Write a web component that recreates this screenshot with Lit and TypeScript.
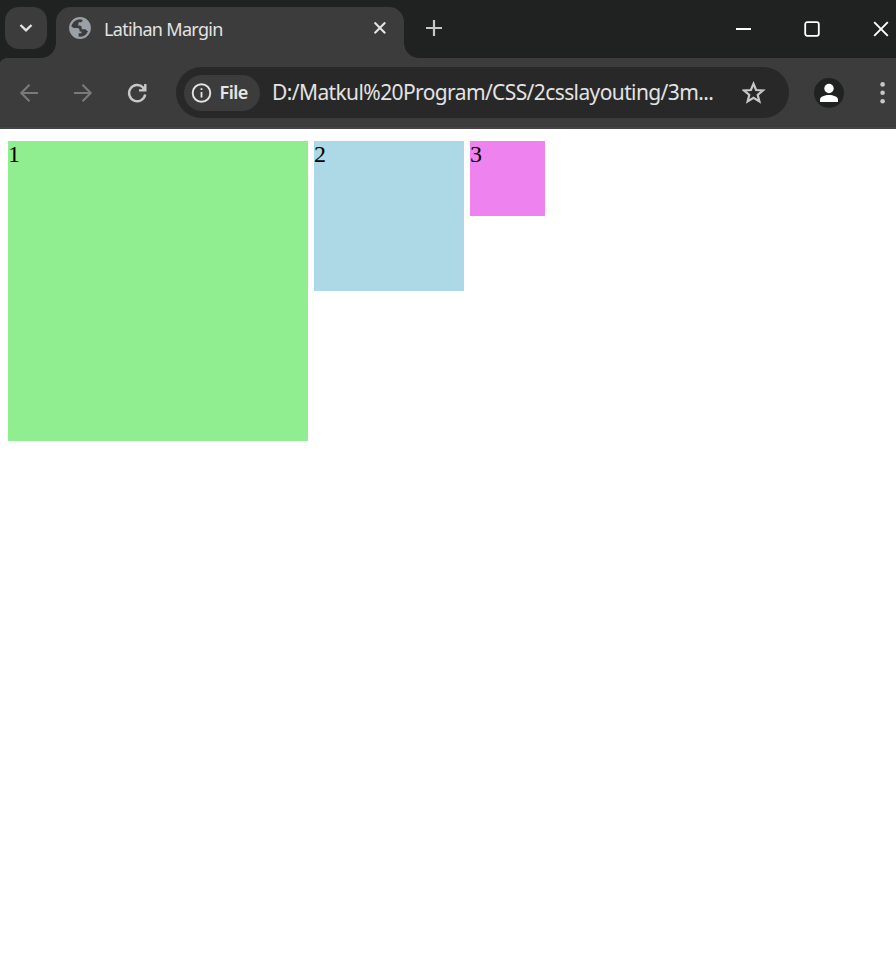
import { LitElement, html, css, svg } from "lit";
import { customElement } from "lit/decorators.js";

@customElement("app-root")
export class AppRoot extends LitElement {
  static styles = css`
    :host { display: block; width: 896px; height: 963px; background: #fff; overflow: hidden; font-family: "Noto Sans", "Open Sans", sans-serif; }
    * { box-sizing: border-box; }
    svg { display: block; flex: none; }
    .strip { display: flex; height: 58px; padding-top: 7px; background: #202221; position: relative; }
    .search { width: 42px; height: 42px; margin-left: 5px; border-radius: 14px; background: #3c3c3c; }
    .tab { position: relative; display: flex; width: 348px; height: 51px; margin-left: 9px; background: #3c3c3c; border-radius: 15px 15px 0 0; color: #e3e3e3; }
    .tab::before, .tab::after { content: ""; position: absolute; bottom: 0; width: 15px; height: 15px; }
    .tab::before { left: -15px; background: radial-gradient(circle at 0 0, transparent 14.5px, #3c3c3c 15.3px); }
    .tab::after { right: -15px; background: radial-gradient(circle at 100% 0, transparent 14.5px, #3c3c3c 15.3px); }
    .globe { margin: 10px 0 0 13px; }
    .title { margin-left: 13px; width: 265px; line-height: 24px; padding-top: 10px; font-size: 18px; letter-spacing: -0.68px; white-space: nowrap; }
    .close { margin: 14px 0 0 4px; }
    .plus { margin: 12px 0 0 21px; }
    .controls { display: flex; margin-left: auto; gap: 53px; padding: 14px 7px 0 0; }
    .bar { display: flex; align-items: center; height: 71px; background: #3c3c3c; border-bottom: 2px solid #474445; position: relative; }
    .bar::before { content: ""; position: absolute; left: 0; top: 0; width: 8px; height: 5px; background: radial-gradient(ellipse at 100% 100%, transparent 66%, #202221 71%); }
    .nav { display: flex; gap: 30px; padding-left: 17px; }
    .omni { display: flex; align-items: center; width: 613px; height: 51px; margin-left: 27px; padding: 0 23px 0 8px; border-radius: 26px; background: #282828; }
    .chip { display: flex; align-items: center; width: 76px; height: 36px; padding-left: 6px; border-radius: 18px; background: #3c3c3c; color: #e6e6e6; font-size: 18px; font-weight: 600; letter-spacing: -0.5px; }
    .chip span { margin-left: 5.5px; margin-top: -1px; }
    .url { flex: 1; margin-left: 12px; margin-top: -1px; color: #e3e3e3; font-size: 21px; letter-spacing: -0.61px; white-space: nowrap; }
    .avatar { margin-left: 25px; }
    .dots { margin-left: 36px; }
    .page { display: flex; align-items: flex-start; gap: 6px; padding: 12px 8px; }
    .box { font: 24px/27px "Liberation Serif", serif; color: #000; }
    .one { width: 300px; height: 300px; background: lightgreen; }
    .two { width: 150px; height: 150px; background: lightblue; }
    .three { width: 75px; height: 75px; background: violet; }
  `;

  private icon(w: number, h: number, body: unknown, cls = "") {
    return html`<svg class=${cls} width=${w} height=${h} viewBox="0 0 ${w} ${h}" fill="none">${body}</svg>`;
  }

  render() {
    return html`
      <div class="strip">
        <div class="search">${this.icon(42, 42, svg`<path d="M15.5 18L21 23.3L26.5 18" stroke="#e3e3e3" stroke-width="2.4"/>`)}</div>
        <div class="tab">
          ${this.icon(22, 22, svg`<circle cx="11" cy="11" r="9.8" stroke="#9aa0a6" stroke-width="2.2"/><path d="M13.5 1.5V3.2C13.5 4.4 12.6 5.3 11.4 5.3H9.5V7.2C9.5 7.9 9 8.4 8.3 8.4H10.5C11.8 8.4 12.7 9.3 12.7 10.6V12.2H15.6C16.7 12.2 17.7 12.9 18 13.9L20.6 14C22 8 18.5 2.5 13.5 1.5ZM1.3 9.2L5 11H8.4C9.8 11 10.6 12 10.6 13.3V14.5H12.5V16.3H9.6V20.6C4.5 20 .3 15 1.3 9.2Z" fill="#9aa0a6"/>`, "globe")}
          <div class="title">Latihan Margin</div>
          ${this.icon(14, 14, svg`<path d="M1.6 1.6L12.2 12.2M12.2 1.6L1.6 12.2" stroke="#e3e3e3" stroke-width="2.1"/>`, "close")}
        </div>
        ${this.icon(18, 18, svg`<path d="M9 1V17M1 9H17" stroke="#c7c7c7" stroke-width="2.2"/>`, "plus")}
        <div class="controls">
          ${this.icon(16, 16, svg`<path d="M1 8H16" stroke="#fff" stroke-width="2"/>`)}
          ${this.icon(16, 16, svg`<rect x="1.2" y="1.2" width="13.6" height="13.6" rx="2" stroke="#fff" stroke-width="1.8"/>`)}
          ${this.icon(16, 16, svg`<path d="M1.2 1.2L14.8 14.8M14.8 1.2L1.2 14.8" stroke="#fff" stroke-width="1.9"/>`)}
        </div>
      </div>
      <div class="bar">
        <div class="nav">
          ${this.icon(24, 24, svg`<path d="M21 12H4.5M12.5 3.8L4.3 12L12.5 20.2" stroke="#7a7a7a" stroke-width="2.1"/>`)}
          ${this.icon(24, 24, svg`<path d="M3 12H19.5M11.5 3.8L19.7 12L11.5 20.2" stroke="#7a7a7a" stroke-width="2.1"/>`)}
          ${this.icon(24, 24, svg`<path d="M20.2 13.5A8.1 8.1 0 1 1 18.2 6.6L20.2 8.8M14 9.4H20.3V3" stroke="#c7c7c7" stroke-width="2.4"/><path d="M15.5 9.5L20.5 4.5V9.5Z" fill="#c7c7c7"/>`)}
        </div>
        <div class="omni">
          <div class="chip">
            ${this.icon(24, 24, svg`<circle cx="11.5" cy="12" r="8.8" stroke="#e3e3e3" stroke-width="1.9"/><path d="M11.5 11V16.5M11.5 7.2V9" stroke="#e3e3e3" stroke-width="1.8"/>`)}
            <span>File</span>
          </div>
          <div class="url">D:/Matkul%20Program/CSS/2csslayouting/3m...</div>
          ${this.icon(24, 24, svg`<path d="M11.5 2.8L14.1 9L20.9 9.5L15.7 13.9L17.4 20.5L11.5 16.9L5.6 20.5L7.3 13.9L2.1 9.5L8.9 9Z" stroke="#c7c7c7" stroke-width="2.2"/>`)}
        </div>
        ${this.icon(30, 30, svg`<circle cx="15" cy="15" r="15" fill="#202221"/><circle cx="15" cy="10.5" r="4.7" fill="#fff"/><path d="M6 24V21.5C6 18.5 11 17 15 17S24 18.5 24 21.5V24Z" fill="#fff"/>`, "avatar")}
        ${this.icon(6, 24, svg`<circle cx="2.6" cy="3.4" r="2.3" fill="#c7c7c7"/><circle cx="2.6" cy="11.8" r="2.3" fill="#c7c7c7"/><circle cx="2.6" cy="20.2" r="2.3" fill="#c7c7c7"/>`, "dots")}
      </div>
      <main class="page">
        <div class="box one">1</div>
        <div class="box two">2</div>
        <div class="box three">3</div>
      </main>
    `;
  }
}
